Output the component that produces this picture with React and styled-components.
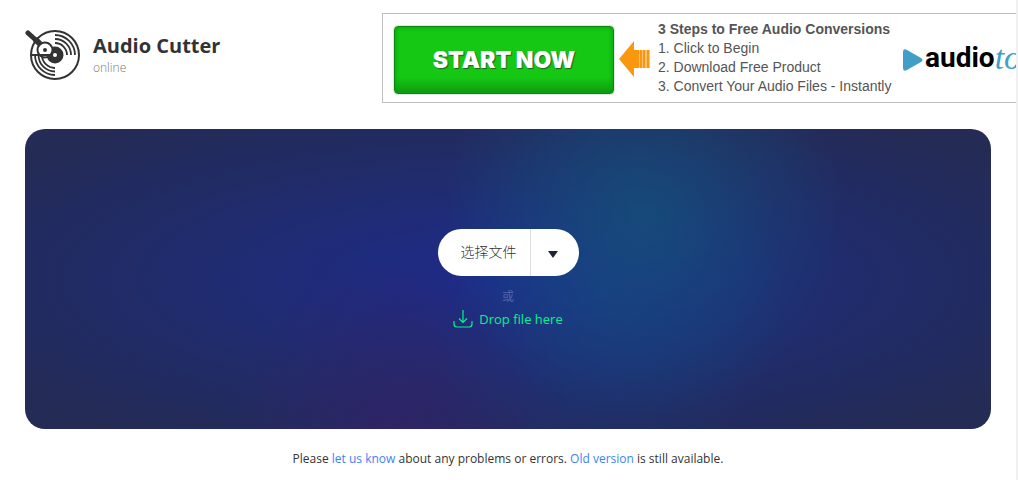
import React from 'react';
import styled, { createGlobalStyle } from 'styled-components';


const GlobalStyle = createGlobalStyle`
  * {
    box-sizing: border-box;
  }

  body {
    margin: 0;
    background: #fff;
    color: #333;
    font-family: 'Open Sans', 'Noto Sans CJK SC', sans-serif;
    font-size: 12px;
  }
`;

const StyledPage = styled.div`
  min-height: 100vh;
  padding: 13px 25px 0;
  border-right: 2px solid #f0f0f0;
  overflow: hidden;
`;

const Header = styled.header`
  display: flex;
  justify-content: space-between;
  height: 90px;
  margin-bottom: 26px;
`;

const Brand = styled.a`
  display: flex;
  gap: 12px;
  flex: none;
  width: 357px;
  padding-top: 16px;
  color: #333;
  text-decoration: none;

  svg {
    flex: none;
  }

  h1 {
    margin: 3px 0 0;
    font-size: 20px;
    font-weight: 700;
    line-height: 28px;
  }

  span {
    display: block;
    color: #777;
    font-weight: 300;
    line-height: 16px;
  }
`;

const Banner = styled.aside`
  display: flex;
  align-items: center;
  flex: none;
  width: 728px;
  margin-right: auto;
  padding-left: 11px;
  border: 1px solid #bfbfbf;
  font-family: 'Liberation Sans', Arial, sans-serif;
`;

const StartButton = styled.button`
  flex: none;
  width: 220px;
  height: 68px;
  margin-top: 4px;
  padding: 0;
  border: 1px solid #0a8a0d;
  border-radius: 4px;
  background: linear-gradient(#14c814 76%, #0f9d10);
  box-shadow: inset 0 0 5px #0b970d, 0 0 2px #999;
  color: #fff;
  font-family: 'Inter', sans-serif;
  font-size: 23px;
  font-weight: 900;
  text-shadow: 1px 1px 1px #245c24;
  cursor: pointer;
`;

const Arrow = styled.svg`
  flex: none;
  margin: 2px 8px 0 5px;
`;

const Steps = styled.div`
  flex: none;
  width: 245px;
  color: #555;
  font-size: 14px;
  line-height: 19px;

  strong {
    white-space: nowrap;
  }

  ol {
    margin: 0;
    padding: 0;
    list-style-position: inside;
  }
`;

const AdLogo = styled.div`
  display: flex;
  align-items: center;
  color: #000;
  font-family: 'Roboto', sans-serif;
  font-size: 28px;
  font-weight: 700;
  line-height: 40px;

  svg {
    flex: none;
    margin: 4px 2px 0 0;
  }

  em {
    color: #419fc7;
    font-family: 'Liberation Serif', serif;
    font-size: 34px;
    font-weight: 400;
  }
`;

const DropZone = styled.main`
  display: flex;
  flex-direction: column;
  align-items: center;
  justify-content: center;
  min-height: 300px;
  padding-bottom: 2px;
  border-radius: 20px;
  background:
    radial-gradient(circle at 64% 29%, rgba(20, 82, 122, 0.75), rgba(20, 82, 122, 0) 200px),
    radial-gradient(circle at 60% 55%, rgba(18, 70, 140, 0.4), rgba(18, 70, 140, 0) 180px),
    radial-gradient(circle at 39% 100%, rgba(50, 34, 104, 0.75), rgba(50, 34, 104, 0) 170px),
    radial-gradient(farthest-corner at 50% 50%, #1e2a8a, #202c6c 50%, #242b55 90%);
`;

const Picker = styled.div`
  display: flex;
  height: 47px;
  border-radius: 24px;
  background: #fff;
  overflow: hidden;

  button {
    border: 0;
    background: none;
    color: #333;
    font-family: 'Open Sans', 'Noto Sans CJK SC', sans-serif;
    font-size: 14px;
    font-weight: 300;
    cursor: pointer;
  }
`;

const ChooseButton = styled.button`
  && {
    padding: 0 13px 2px 23px;
  }
`;

const SourceButton = styled.button`
  width: 49px;

  && {
    padding: 0 4px 0 0;
    border-left: 1px solid #ddd;
  }
`;

const Or = styled.p`
  margin: 12px 0 4px;
  color: #5665a4;
  line-height: 18px;
`;

const DropHint = styled.div`
  display: flex;
  align-items: center;
  gap: 6px;
  color: #00f58c;
  font-size: 13px;
  line-height: 18px;
`;

const Footer = styled.footer`
  padding: 21px 0 12px;
  line-height: 18px;
  text-align: center;

  a {
    color: #3c83f6;
    text-decoration: none;
  }
`;

const LogoIcon = () => (
  <svg width="56" height="52" viewBox="0 0 56 52" fill="none" stroke="#333" aria-hidden="true">
    <circle cx="30" cy="26" r="24" strokeWidth="2" />
    <path d="M30 6a20 20 0 0 1 20 20M30 10a16 16 0 0 1 16 16M30 14a12 12 0 0 1 12 12" strokeWidth="1.8" />
    <path d="M10 26a20 20 0 0 0 20 20M13.500 26a16.500 16.500 0 0 0 16.500 16.500M17 26a13 13 0 0 0 13 13" strokeWidth="1.8" />
    <circle cx="30" cy="26" r="8.5" fill="#333" stroke="none" />
    <circle cx="20" cy="21" r="7.5" fill="#fff" strokeWidth="2" />
    <path d="M6 26h19" strokeWidth="2" />
    <path d="M3 4l10 9" strokeWidth="5" strokeLinecap="round" />
    <path d="M10 10l5 5" strokeWidth="6" />
    <circle cx="20" cy="21" r="2" fill="#333" stroke="none" />
    <circle cx="30" cy="26" r="2" fill="#fff" stroke="none" />
  </svg>
);

const App = () => {
  return (
    <>
      <GlobalStyle />
      <StyledPage>
        <Header>
          <Brand href="#">
            <LogoIcon />
            <div>
              <h1>Audio Cutter</h1>
              <span>online</span>
            </div>
          </Brand>

          <Banner>
            <StartButton type="button">START NOW</StartButton>
            <Arrow width="31" height="38" viewBox="0 0 31 38" fill="#f9980f" aria-hidden="true">
              <path d="M0 19L15 1v9h5v18h-5v9z" />
              <path d="M20 10h11v18H20z" fill="#fdc272" />
              <path d="M21 10h2v18h-2zM24 10h2v18h-2zM28 10h2v18h-2z" />
            </Arrow>
            <Steps>
              <strong>3 Steps to Free Audio Conversions</strong>
              <ol>
                <li>Click to Begin</li>
                <li>Download Free Product</li>
                <li>Convert Your Audio Files - Instantly</li>
              </ol>
            </Steps>
            <AdLogo>
              <svg width="20" height="22" viewBox="0 0 20 22" aria-hidden="true">
                <path d="M0 3Q0-1 4 1l14 8q3 2 0 4L4 21q-4 2-4-2z" fill="#419fc7" />
              </svg>
              audio<em>to</em>
            </AdLogo>
          </Banner>
        </Header>

        <DropZone>
          <Picker>
            <ChooseButton type="button">选择文件</ChooseButton>
            <SourceButton type="button" aria-label="More sources">
              <svg width="10" height="7" viewBox="0 0 10 7" aria-hidden="true">
                <path d="M0 0h10L5 7z" fill="#1f2430" />
              </svg>
            </SourceButton>
          </Picker>
          <Or>或</Or>
          <DropHint>
            <svg width="20" height="18" viewBox="0 0 20 18" fill="none" stroke="currentColor" strokeWidth="1.2" aria-hidden="true">
              <path d="M10 0v12M6 8.5l4 4 4-4M1 11v3q0 3 3 3h12q3 0 3-3v-3" />
            </svg>
            Drop file here
          </DropHint>
        </DropZone>

        <Footer>
          Please <a href="#">let us know</a> about any problems or errors. <a href="#">Old version</a> is still available.
        </Footer>
      </StyledPage>
    </>
  );
};

export default App;
